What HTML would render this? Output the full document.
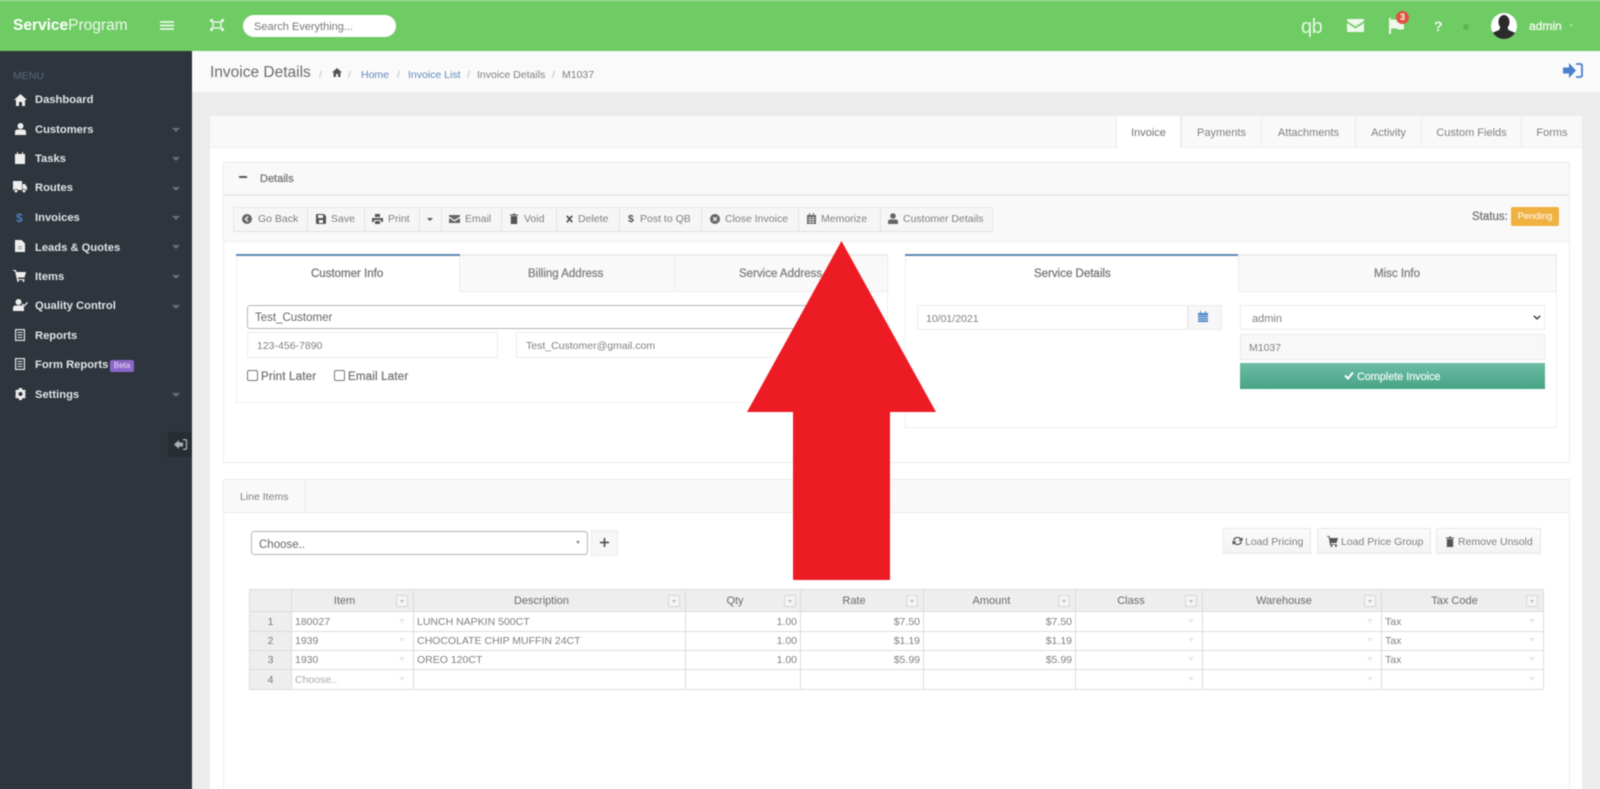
<!DOCTYPE html>
<html><head><meta charset="utf-8"><title>Invoice Details</title>
<style>
html,body{margin:0;padding:0;width:1600px;height:789px;overflow:hidden;background:#ececec;font-family:"Liberation Sans",sans-serif;color:#777}
#o{position:absolute;left:0;top:0;width:1600px;height:789px;overflow:hidden}
#r{position:absolute;left:-8px;top:-8px;width:1616px;height:805px;background:#ececec;filter:blur(.5px)}
#i{position:absolute;left:8px;top:8px;width:1600px;height:789px}
.a,.t{position:absolute}
.t{white-space:nowrap;line-height:14px;height:14px;margin-top:1px}
.b{position:absolute;box-sizing:border-box}
.s{-webkit-text-stroke:.3px currentColor}
svg{position:absolute;overflow:visible}
.m{left:35px;font-size:11.2px;font-weight:bold;color:#e2e4e6}
.c{left:172px;width:0;height:0;border:4px solid transparent;border-top:4px solid #69707a;border-bottom:0;position:absolute}
.tab{position:absolute;top:116px;height:32px;box-sizing:border-box;background:#f9f9f9;border-left:1px solid #ececec;text-align:center;line-height:34px;font-size:11px;color:#808080}
.sep{position:absolute;top:207px;width:1px;height:24px;background:#e4e4e4}
.bt{font-size:10.5px;color:#808080;top:211px}
.ft{position:absolute;width:12px;height:12px;box-sizing:border-box;border:1px solid #d6d6d6;background:#f4f4f4;top:595px}
.ft:after{content:"";position:absolute;left:3px;top:4px;border:2.5px solid transparent;border-top:3px solid #bbb;border-bottom:0}
.dd{position:absolute;border:3px solid transparent;border-top:4px solid #e8e8e8;border-bottom:0}
table{position:absolute;left:249px;top:589px;width:1294px;border-collapse:collapse;table-layout:fixed;font-size:10.5px;color:#808080}
td{border:1px solid #dcdcdc;padding:0 3px;white-space:nowrap;overflow:hidden;box-sizing:border-box}
tr.h td{background:#eee;text-align:center;color:#6a6a6a;font-size:11px;padding-right:19px;height:22px}
td.n{background:#eee;text-align:center;padding:0;color:#777}
td.x{text-align:right}
.lb{position:absolute;box-sizing:border-box;background:linear-gradient(#fbfbfb,#f3f3f3);border:1px solid #e8e8e8}
</style></head><body><div id="o"><div id="r"><div id="i">

<!-- top bar -->
<div class="b" style="left:-8px;top:-8px;width:1616px;height:59px;background:#6fcb64"></div>
<div class="b" style="left:-8px;top:-8px;width:1616px;height:9px;background:#9adc92"></div>
<div class="t" style="left:13px;top:18px;font-size:15.5px;color:#eef9ec"><b style="color:#fff">Service</b>Program</div>
<svg style="left:160px;top:21px" width="14" height="9"><path d="M0 1h14M0 4.500h14M0 8h14" stroke="#eaf8e8" stroke-width="1.700"/></svg>
<svg style="left:210px;top:19px" width="14" height="12" fill="none" stroke="#e6f6e3" stroke-width="1.500"><path d="M3 3h8v6H3z"/><path d="M0 0h3v3H0zM11 0h3v3h-3zM0 9h3v3H0zM11 9h3v3h-3z" fill="#e6f6e3" stroke="none"/></svg>
<div class="b" style="left:243px;top:15px;width:153px;height:22px;border-radius:11px;background:#fff"></div>
<div class="t" style="left:254px;top:19px;font-size:11px;color:#777">Search Everything...</div>

<div class="t" style="left:1301px;top:16px;font-size:20px;line-height:20px;height:20px;color:#e6f6e3;letter-spacing:-.5px">qb</div>
<svg style="left:1347px;top:19px" width="17" height="13"><path d="M1 0h15a1 1 0 0 1 1 1v1L8.500 7.500 0 2V1a1 1 0 0 1 1-1zM0 4l8.500 5.500L17 4v8a1 1 0 0 1-1 1H1a1 1 0 0 1-1-1z" fill="#eef9ec"/></svg>
<svg style="left:1388px;top:18px" width="18" height="16"><path d="M1 0h2v16H1zM3 2c5-2 7 2 13 0v9c-6 2-8-2-13 0z" fill="#eef9ec"/></svg>
<div class="b" style="left:1396px;top:11px;width:13px;height:13px;border-radius:50%;background:#df5440;color:#fff;font-size:9px;font-weight:bold;text-align:center;line-height:13px">3</div>
<div class="t" style="left:1434px;top:18px;font-size:14px;font-weight:bold;color:#eef9ec">?</div>
<div class="b" style="left:1463px;top:24px;width:6px;height:6px;border-radius:50%;background:#5cb555"></div>
<svg style="left:1491px;top:13px" width="26" height="26"><defs><clipPath id="av"><circle cx="13" cy="13" r="13"/></clipPath></defs><circle cx="13" cy="13" r="13" fill="#fff"/><g clip-path="url(#av)" fill="#2b2b2b"><ellipse cx="13" cy="9" rx="5.500" ry="7"/><path d="M9.500 14h7l1 3 7 3v6H1v-6l7-3z"/></g></svg>
<div class="t s" style="left:1529px;top:18px;font-size:12px;color:#f2fbf0">admin</div>
<div class="a" style="left:1569px;top:24px;border:2.500px solid transparent;border-top:3px solid #a9e0a2;border-bottom:0"></div>

<!-- sidebar -->
<div class="b" style="left:-8px;top:51px;width:200px;height:746px;background:#2e353d"></div>
<div class="t" style="left:13px;top:68px;font-size:10.5px;color:#566a80">MENU</div>

<svg style="left:14px;top:94px" width="13" height="12"><path d="M6.500 0L13 6h-2v6H8V8H5v4H2V6H0z" fill="#eee"/></svg>
<div class="t m" style="top:92px">Dashboard</div>
<svg style="left:15px;top:123px" width="11" height="12"><circle cx="5.500" cy="3" r="3" fill="#eee"/><path d="M0 12V9q0-2.500 3-2.500h5q3 0 3 2.500v3z" fill="#eee"/></svg>
<div class="t m" style="top:122px">Customers</div><div class="c" style="top:128px"></div>
<svg style="left:15px;top:152px" width="10" height="12"><path d="M0 2h2V0h1v2h4V0h1v2h2v10H0z" fill="#eee"/></svg>
<div class="t m" style="top:151px">Tasks</div><div class="c" style="top:157px"></div>
<svg style="left:13px;top:181px" width="14" height="12"><path d="M0 0h9v9H0zM9.500 3H12l2 3v3H9.500z" fill="#eee"/><circle cx="3" cy="10" r="1.800" fill="#eee" stroke="#2e353d" stroke-width=".7"/><circle cx="11" cy="10" r="1.800" fill="#eee" stroke="#2e353d" stroke-width=".7"/></svg>
<div class="t m" style="top:180px">Routes</div><div class="c" style="top:187px"></div>
<div class="t" style="left:16px;top:210px;font-size:12px;font-weight:bold;color:#4c7fc0">$</div>
<div class="t m" style="top:210px">Invoices</div><div class="c" style="top:216px"></div>
<svg style="left:15px;top:240px" width="10" height="12"><path d="M0 0h6.500L10 3.500V12H0z" fill="#eee"/><path d="M3 6h4v1H3zM3 8h4v1H3z" fill="#999"/></svg>
<div class="t m" style="top:240px">Leads &amp; Quotes</div><div class="c" style="top:245px"></div>
<svg style="left:13px;top:270px" width="13" height="12"><path d="M0 0h3l.6 2H13l-1.500 5.500H5L5.300 9H11.500v1H4L2 1H0z" fill="#eee"/><circle cx="5" cy="11" r="1" fill="#eee"/><circle cx="10.500" cy="11" r="1" fill="#eee"/></svg>
<div class="t m" style="top:269px">Items</div><div class="c" style="top:275px"></div>
<svg style="left:13px;top:299px" width="15" height="12"><circle cx="5.500" cy="3" r="3" fill="#eee"/><path d="M0 12V9q0-2.500 3-2.500h5q3 0 3 2.500v3z" fill="#eee"/><path d="M9 5l2 2 3.500-3.500" fill="none" stroke="#eee" stroke-width="1.300"/></svg>
<div class="t m" style="top:298px">Quality Control</div><div class="c" style="top:305px"></div>
<svg style="left:15px;top:329px" width="10" height="12"><rect x=".6" y=".6" width="8.800" height="10.800" fill="none" stroke="#e6e6e6" stroke-width="1.200"/><path d="M2.500 3.500h5M2.500 6h5M2.500 8.500h5" stroke="#e6e6e6" stroke-width="1"/></svg>
<div class="t m" style="top:328px">Reports</div>
<svg style="left:15px;top:358px" width="10" height="12"><rect x=".6" y=".6" width="8.800" height="10.800" fill="none" stroke="#e6e6e6" stroke-width="1.200"/><path d="M2.500 3.500h5M2.500 6h5M2.500 8.500h5" stroke="#e6e6e6" stroke-width="1"/></svg>
<div class="t m" style="top:357px">Form Reports</div>
<div class="b" style="left:110px;top:360px;width:24px;height:12px;background:#8d66c9;border-radius:2px;color:#e7dcf6;font-size:8px;line-height:12px;text-align:center">Beta</div>
<svg style="left:15px;top:388px" width="11" height="12"><circle cx="5.500" cy="6" r="3.500" fill="none" stroke="#eee" stroke-width="3"/><path d="M4 0h3v2H4zM4 10h3v2H4zM0 3l1.500-1.500L3 3 2 4.500zM11 3L9.500 1.500 8 3l1 1.500zM0 9l1.500 1.500L3 9 2 7.500zM11 9l-1.500 1.500L8 9l1-1.500z" fill="#eee"/></svg>
<div class="t m" style="top:387px">Settings</div><div class="c" style="top:393px"></div>
<div class="b" style="left:168px;top:432px;width:24px;height:25px;background:#272d33"></div>
<svg style="left:174px;top:439px" width="13" height="11"><path d="M0 5.500L5 1v2.500h4v4H5V10z" fill="#aab0b5"/><path d="M9 .7h2.500q1 0 1 1v7.600q0 1-1 1H9" fill="none" stroke="#aab0b5" stroke-width="1.300"/></svg>

<!-- page bar -->
<div class="b" style="left:192px;top:51px;width:1416px;height:42px;background:#fafafa;border-bottom:1px solid #e8e8e8"></div>
<div class="t" style="left:210px;top:64px;font-size:15.5px;line-height:16px;height:16px;color:#6d6d6d">Invoice Details</div>
<div class="t" style="left:319px;top:67px;font-size:10.5px;color:#bbb">/</div>
<svg style="left:332px;top:68px" width="10" height="9"><path d="M5 0l5 4.500H8.500V9H6V6H4v3H1.500V4.500H0z" fill="#555"/></svg>
<div class="t" style="left:348px;top:67px;font-size:10.5px;color:#bbb">/</div>
<div class="t" style="left:361px;top:67px;font-size:10.5px;color:#6089bd">Home</div>
<div class="t" style="left:397px;top:67px;font-size:10.5px;color:#bbb">/</div>
<div class="t" style="left:408px;top:67px;font-size:10.5px;color:#6089bd">Invoice List</div>
<div class="t" style="left:467px;top:67px;font-size:10.5px;color:#bbb">/</div>
<div class="t" style="left:477px;top:67px;font-size:10.5px;color:#808080">Invoice Details</div>
<div class="t" style="left:552px;top:67px;font-size:10.5px;color:#bbb">/</div>
<div class="t" style="left:562px;top:67px;font-size:10.5px;color:#808080">M1037</div>
<svg style="left:1563px;top:63px" width="20" height="15"><path d="M0 4.500h6V0l7 7.500L6 15v-4.500H0z" fill="#4a7fcb"/><path d="M13 1h4q2 0 2 2v9q0 2-2 2h-4" fill="none" stroke="#4a7fcb" stroke-width="1.800"/></svg>

<!-- main panel -->
<div class="b" style="left:210px;top:116px;width:1372px;height:681px;background:#fff"></div>
<div class="b" style="left:210px;top:116px;width:906px;height:32px;background:#f9f9f9;border-bottom:1px solid #eee"></div>
<div class="tab" style="left:1116px;width:65px;background:#fff;border-left:1px solid #ececec;border-right:1px solid #ececec;color:#6f6f6f;height:33px">Invoice</div>
<div class="tab" style="left:1181px;width:80px;border-bottom:1px solid #eee">Payments</div>
<div class="tab" style="left:1261px;width:94px;border-bottom:1px solid #eee">Attachments</div>
<div class="tab" style="left:1355px;width:66px;border-bottom:1px solid #eee">Activity</div>
<div class="tab" style="left:1421px;width:100px;border-bottom:1px solid #eee">Custom Fields</div>
<div class="tab" style="left:1521px;width:61px;border-bottom:1px solid #eee">Forms</div>

<!-- details -->
<div class="b" style="left:223px;top:162px;width:1347px;height:301px;border:1px solid #ececec;background:#fff"></div>
<div class="b" style="left:223px;top:162px;width:1347px;height:34px;background:#f9f9f9;border:1px solid #ececec;border-bottom:2px solid #e8e8e8"></div>
<div class="b" style="left:239px;top:176px;width:8px;height:2px;background:#555"></div>
<div class="t s" style="left:260px;top:171px;font-size:11px;color:#777">Details</div>
<div class="b" style="left:224px;top:196px;width:1345px;height:46px;background:#f9f9f9;border-bottom:1px solid #eee"></div>

<!-- toolbar -->
<div class="b" style="left:233px;top:207px;width:760px;height:25px;background:#f6f6f6;border:1px solid #e8e8e8;border-bottom:1px solid #e0e0e0"></div>
<div class="sep" style="left:307px"></div><div class="sep" style="left:364px"></div><div class="sep" style="left:419px"></div><div class="sep" style="left:441px"></div><div class="sep" style="left:501px"></div><div class="sep" style="left:556px"></div><div class="sep" style="left:619px"></div><div class="sep" style="left:701px"></div><div class="sep" style="left:798px"></div><div class="sep" style="left:880px"></div>
<svg style="left:242px;top:214px" width="10" height="10"><circle cx="5" cy="5" r="5" fill="#666"/><path d="M6 2.500L3.500 5 6 7.500" fill="none" stroke="#f6f6f6" stroke-width="1.400"/></svg>
<div class="t bt" style="left:258px">Go Back</div>
<svg style="left:316px;top:214px" width="10" height="10"><path d="M1 0h7l2 2v7a1 1 0 0 1-1 1H1a1 1 0 0 1-1-1V1a1 1 0 0 1 1-1z" fill="#555"/><path d="M2 1h5v3H2z" fill="#f6f6f6"/><rect x="3" y="6" width="4" height="3" fill="#f6f6f6"/></svg>
<div class="t bt" style="left:331px">Save</div>
<svg style="left:372px;top:214px" width="11" height="10"><path d="M3 0h5v3H3zM0 4h11v4H9V6H2v2H0zM3 7h5v3H3z" fill="#555"/></svg>
<div class="t bt" style="left:388px">Print</div>
<div class="a" style="left:427px;top:218px;border:3px solid transparent;border-top:3px solid #555;border-bottom:0"></div>
<svg style="left:449px;top:215px" width="11" height="8"><path d="M0 0h11v1.500L5.500 5 0 1.500zM0 3l5.500 3.500L11 3v5H0z" fill="#666"/></svg>
<div class="t bt" style="left:465px">Email</div>
<svg style="left:510px;top:213px" width="8" height="11"><path d="M0 1.500h8v1H0zM3 .5h2v1H3zM.8 3h6.400v8H.8z" fill="#555"/></svg>
<div class="t bt" style="left:524px">Void</div>
<svg style="left:566px;top:215px" width="7" height="8"><path d="M.8.8l5.400 6.400M6.200.8L.8 7.200" stroke="#555" stroke-width="1.800"/></svg>
<div class="t bt" style="left:578px">Delete</div>
<div class="t bt" style="left:628px;color:#555;font-weight:bold">$</div>
<div class="t bt" style="left:640px">Post to QB</div>
<svg style="left:710px;top:214px" width="10" height="10"><circle cx="5" cy="5" r="5" fill="#666"/><path d="M3.200 3.200l3.600 3.600M6.800 3.200L3.200 6.800" stroke="#f6f6f6" stroke-width="1.300"/></svg>
<div class="t bt" style="left:725px">Close Invoice</div>
<svg style="left:807px;top:213px" width="9" height="11"><path d="M0 2h2V0h1v2h3V0h1v2h2v9H0z" fill="#666"/><path d="M1 4.500h7M1 6.700h7M1 8.900h7M3 4v7M6 4v7" stroke="#f6f6f6" stroke-width=".6"/></svg>
<div class="t bt" style="left:821px">Memorize</div>
<svg style="left:888px;top:213px" width="10" height="11"><circle cx="5" cy="3" r="2.800" fill="#666"/><path d="M0 11V8.500Q0 6.500 2.500 6.500h5Q10 6.500 10 8.500V11z" fill="#666"/></svg>
<div class="t bt" style="left:903px">Customer Details</div>

<div class="t s" style="left:1472px;top:209px;font-size:11.500px;color:#777">Status:</div>
<div class="b" style="left:1511px;top:207px;width:48px;height:19px;background:#f0b141;border-radius:2px;color:#fff;font-size:9.5px;line-height:20px;text-align:center">Pending</div>

<!-- left tabs -->
<div class="b" style="left:236px;top:254px;width:652px;height:149px;border:1px solid #eee"></div>
<div class="b" style="left:459px;top:255px;width:429px;height:37px;background:#f9f9f9;border:1px solid #ececec"></div>
<div class="b" style="left:674px;top:255px;width:1px;height:36px;background:#ececec"></div>
<div class="b" style="left:236px;top:254px;width:224px;height:2px;background:#5e87b4"></div>
<div class="t s" style="left:311px;top:266px;font-size:11.5px;color:#777">Customer Info</div>
<div class="t s" style="left:528px;top:266px;font-size:11.5px;color:#808080">Billing Address</div>
<div class="t s" style="left:739px;top:266px;font-size:11.5px;color:#808080">Service Address</div>
<div class="b" style="left:247px;top:305px;width:620px;height:24px;border:1px solid #b5b5b5;border-radius:3px;background:#fff"></div>
<div class="t" style="left:255px;top:310px;font-size:11.5px;color:#666">Test_Customer</div>
<div class="b" style="left:247px;top:332px;width:251px;height:26px;border:1px solid #ececec;background:#fff"></div>
<div class="t" style="left:257px;top:338px;font-size:10.5px;color:#808080">123-456-7890</div>
<div class="b" style="left:516px;top:332px;width:351px;height:26px;border:1px solid #ececec;background:#fff"></div>
<div class="t" style="left:526px;top:338px;font-size:10.5px;color:#808080">Test_Customer@gmail.com</div>
<div class="b" style="left:247px;top:370px;width:11px;height:11px;border:1px solid #777;border-radius:2px;background:#fff"></div>
<div class="t s" style="left:261px;top:369px;font-size:11.5px;letter-spacing:.2px;color:#777">Print Later</div>
<div class="b" style="left:334px;top:370px;width:11px;height:11px;border:1px solid #777;border-radius:2px;background:#fff"></div>
<div class="t s" style="left:348px;top:369px;font-size:11.5px;letter-spacing:.2px;color:#777">Email Later</div>

<!-- right tabs -->
<div class="b" style="left:905px;top:254px;width:652px;height:174px;border:1px solid #eee"></div>
<div class="b" style="left:1238px;top:255px;width:319px;height:37px;background:#f9f9f9;border:1px solid #ececec"></div>
<div class="b" style="left:905px;top:254px;width:333px;height:2px;background:#5e87b4"></div>
<div class="t s" style="left:1034px;top:266px;font-size:11.5px;color:#777">Service Details</div>
<div class="t s" style="left:1374px;top:266px;font-size:11.5px;color:#808080">Misc Info</div>
<div class="b" style="left:917px;top:305px;width:271px;height:25px;border:1px solid #ececec"></div>
<div class="t" style="left:926px;top:311px;font-size:10.5px;color:#808080">10/01/2021</div>
<div class="b" style="left:1188px;top:305px;width:34px;height:25px;border:1px solid #ececec;background:#f7f7f7"></div>
<svg style="left:1198px;top:311px" width="10" height="11"><path d="M0 2h2V0h1v2h4V0h1v2h2v9H0z" fill="#4f84c8"/><path d="M0 4.500h10M0 6.700h10M0 8.900h10" stroke="#f7f7f7" stroke-width=".6"/></svg>
<div class="b" style="left:1240px;top:305px;width:305px;height:25px;border:1px solid #ececec;background:#fff"></div>
<div class="t" style="left:1252px;top:311px;font-size:11px;color:#808080">admin</div>
<svg style="left:1533px;top:315px" width="8" height="5"><path d="M.8.800L4 3.800 7.200.8" fill="none" stroke="#444" stroke-width="1.500"/></svg>
<div class="b" style="left:1240px;top:334px;width:305px;height:26px;border:1px solid #e8e8e8;background:#f8f8f8"></div>
<div class="t" style="left:1249px;top:340px;font-size:10.5px;color:#808080">M1037</div>
<div class="b" style="left:1240px;top:363px;width:305px;height:26px;background:linear-gradient(#6cbca4,#46a386)"></div>
<svg style="left:1344px;top:371px" width="10" height="9"><path d="M1 4.500l3 3 5-6" fill="none" stroke="#fff" stroke-width="2"/></svg>
<div class="t s" style="left:1357px;top:369px;font-size:10.8px;color:#e9f6f1">Complete Invoice</div>

<!-- line items -->
<div class="b" style="left:223px;top:479px;width:1347px;height:320px;border:1px solid #ececec;background:#fff"></div>
<div class="b" style="left:223px;top:479px;width:1347px;height:34px;background:#f9f9f9;border:1px solid #ececec"></div>
<div class="b" style="left:224px;top:480px;width:82px;height:32px;border-right:1px solid #ececec"></div>
<div class="t" style="left:240px;top:489px;font-size:10.5px;color:#808080">Line Items</div>
<div class="b" style="left:251px;top:531px;width:337px;height:24px;border:1px solid #b5b5b5;border-radius:3px;background:#fff"></div>
<div class="t" style="left:259px;top:537px;font-size:11.5px;color:#666">Choose..</div>
<div class="a" style="left:576px;top:541px;border:2.500px solid transparent;border-top:3.500px solid #888;border-bottom:0"></div>
<div class="b" style="left:591px;top:530px;width:27px;height:26px;background:#f7f7f7;border:1px solid #ececec"></div>
<svg style="left:600px;top:538px" width="9" height="9"><path d="M4.500 0v9M0 4.500h9" stroke="#555" stroke-width="1.700"/></svg>

<div class="lb" style="left:1223px;top:528px;width:88px;height:26px"></div>
<svg style="left:1232px;top:536px" width="11" height="10"><path d="M1 4a4.500 4 0 0 1 8-1.500L10.500 1v4H6.500l1.500-1.500A3 3 0 0 0 2.500 4.500zM10 6a4.500 4 0 0 1-8 1.500L.5 9V5h4L3 6.500A3 3 0 0 0 8.500 5.500z" fill="#555"/></svg>
<div class="t" style="left:1245px;top:534px;font-size:10.5px;color:#808080">Load Pricing</div>
<div class="lb" style="left:1317px;top:528px;width:114px;height:26px"></div>
<svg style="left:1327px;top:536px" width="11" height="11"><path d="M0 0h2.500l.5 2H11L9.500 7H4l.3 1.300H10V9H3L1.700.8H0z" fill="#555"/><circle cx="4.500" cy="10" r="1" fill="#555"/><circle cx="9" cy="10" r="1" fill="#555"/></svg>
<div class="t" style="left:1341px;top:534px;font-size:10.5px;color:#808080">Load Price Group</div>
<div class="lb" style="left:1436px;top:528px;width:105px;height:26px"></div>
<svg style="left:1446px;top:536px" width="8" height="11"><path d="M0 1.500h8v1H0zM3 .5h2v1H3zM.8 3h6.400v8H.8z" fill="#555"/></svg>
<div class="t" style="left:1458px;top:534px;font-size:10.5px;color:#808080">Remove Unsold</div>

<table>
<colgroup><col style="width:42px"><col style="width:122px"><col style="width:272px"><col style="width:115px"><col style="width:123px"><col style="width:152px"><col style="width:127px"><col style="width:179px"><col style="width:162px"></colgroup>
<tr class="h"><td style="padding:0"></td><td>Item</td><td>Description</td><td>Qty</td><td>Rate</td><td>Amount</td><td>Class</td><td>Warehouse</td><td>Tax Code</td></tr>
<tr style="height:20px"><td class="n">1</td><td>180027</td><td>LUNCH NAPKIN 500CT</td><td class="x">1.00</td><td class="x">$7.50</td><td class="x">$7.50</td><td></td><td></td><td>Tax</td></tr>
<tr style="height:19px"><td class="n">2</td><td>1939</td><td>CHOCOLATE CHIP MUFFIN 24CT</td><td class="x">1.00</td><td class="x">$1.19</td><td class="x">$1.19</td><td></td><td></td><td>Tax</td></tr>
<tr style="height:19px"><td class="n">3</td><td>1930</td><td>OREO 120CT</td><td class="x">1.00</td><td class="x">$5.99</td><td class="x">$5.99</td><td></td><td></td><td>Tax</td></tr>
<tr style="height:20px"><td class="n">4</td><td style="color:#aaa">Choose..</td><td></td><td></td><td></td><td></td><td></td><td></td><td></td></tr>
</table>
<div class="ft" style="left:396px"></div><div class="ft" style="left:668px"></div><div class="ft" style="left:784px"></div><div class="ft" style="left:906px"></div><div class="ft" style="left:1058px"></div><div class="ft" style="left:1185px"></div><div class="ft" style="left:1364px"></div><div class="ft" style="left:1526px"></div>
<div class="dd" style="left:399px;top:619px"></div><div class="dd" style="left:399px;top:638px"></div><div class="dd" style="left:399px;top:657px"></div><div class="dd" style="left:399px;top:677px"></div>
<div class="dd" style="left:1188px;top:619px"></div><div class="dd" style="left:1188px;top:638px"></div><div class="dd" style="left:1188px;top:657px"></div><div class="dd" style="left:1188px;top:677px"></div>
<div class="dd" style="left:1367px;top:619px"></div><div class="dd" style="left:1367px;top:638px"></div><div class="dd" style="left:1367px;top:657px"></div><div class="dd" style="left:1367px;top:677px"></div>
<div class="dd" style="left:1529px;top:619px"></div><div class="dd" style="left:1529px;top:638px"></div><div class="dd" style="left:1529px;top:657px"></div><div class="dd" style="left:1529px;top:677px"></div>

<!-- arrow -->
<svg style="left:0;top:0" width="1600" height="789"><path d="M841.500 241L936 412H890V579a1 1 0 0 1-1 1H794a1 1 0 0 1-1-1V412H747z" fill="#ed1c24"/></svg>
</div></div></div></body></html>
